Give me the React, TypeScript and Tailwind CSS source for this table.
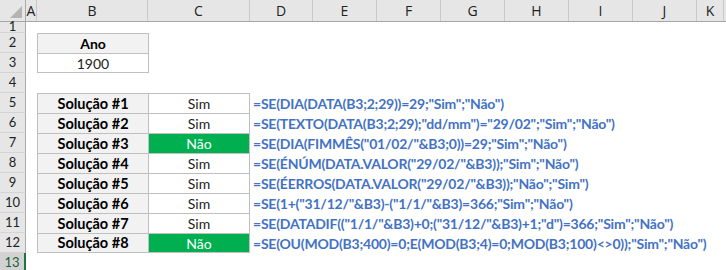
import React from "react";

const cols = [
  { key: "D", w: "w-[63px]" },
  { key: "E", w: "w-[64px]" },
  { key: "F", w: "w-[64px]" },
  { key: "G", w: "w-[64px]" },
  { key: "H", w: "w-[64px]" },
  { key: "I", w: "w-[64px]" },
  { key: "J", w: "w-[64px]" },
];

const solucoes = [
  { n: 1, res: "Sim", f: '=SE(DIA(DATA(B3;2;29))=29;"Sim";"Não")' },
  { n: 2, res: "Sim", f: '=SE(TEXTO(DATA(B3;2;29);"dd/mm")="29/02";"Sim";"Não")' },
  { n: 3, res: "Não", f: '=SE(DIA(FIMMÊS("01/02/"&B3;0))=29;"Sim";"Não")' },
  { n: 4, res: "Sim", f: '=SE(ÉNÚM(DATA.VALOR("29/02/"&B3));"Sim";"Não")' },
  { n: 5, res: "Sim", f: '=SE(ÉERROS(DATA.VALOR("29/02/"&B3));"Não";"Sim")' },
  { n: 6, res: "Sim", f: '=SE(1+("31/12/"&B3)-("1/1/"&B3)=366;"Sim";"Não")' },
  { n: 7, res: "Sim", f: '=SE(DATADIF(("1/1/"&B3)+0;("31/12/"&B3)+1;"d")=366;"Sim";"Não")' },
  { n: 8, res: "Não", f: '=SE(OU(MOD(B3;400)=0;E(MOD(B3;4)=0;MOD(B3;100)<>0));"Sim";"Não")' },
];

const cellFont = { fontFamily: "Lato, 'Open Sans', sans-serif" };

function RowHead({ label, active = false }: { label: string; active?: boolean }) {
  return (
    <div
      className={
        active
          ? "w-[26px] shrink-0 flex items-center justify-center bg-[#d2d2d2] border-r-2 border-[#217346] text-[#1e5d3a] text-[13px]"
          : "w-[26px] shrink-0 flex items-center justify-center bg-[#e6e6e6] border-r border-b border-r-[#ababab] border-b-[#d4d4d4] text-[#222] text-[13px]"
      }
    >
      {label}
    </div>
  );
}

function SheetRow({
  label,
  h,
  active,
  children,
}: {
  label: string;
  h: string;
  active?: boolean;
  children?: React.ReactNode;
}) {
  return (
    <div className={`flex ${h}`}>
      <RowHead label={label} active={active} />
      <div className="w-[11px] shrink-0" />
      {children}
    </div>
  );
}

export default function App() {
  return (
    <div
      className="w-[726px] h-[270px] overflow-hidden bg-white select-none"
      style={{ fontFamily: "'Open Sans', 'Noto Sans', sans-serif" }}
    >
      {/* column headers */}
      <div className="flex h-[22px] bg-[#e6e6e6] border-b border-[#a6a6a6] text-[14px] text-[#222]">
        <div className="w-[26px] shrink-0 border-r border-[#ababab] relative">
          <svg className="absolute inset-0" width="25" height="21" viewBox="0 0 25 21">
            <polygon points="22,6 22,18 10,18" fill="#b4b4b4" />
          </svg>
        </div>
        <div className="w-[11px] shrink-0 border-r border-[#c8c8c8] flex items-center justify-center">A</div>
        <div className="w-[111px] shrink-0 border-r border-[#c8c8c8] flex items-center justify-center">B</div>
        <div className="w-[102px] shrink-0 border-r border-[#c8c8c8] flex items-center justify-center">C</div>
        {cols.map((c) => (
          <div key={c.key} className={`${c.w} shrink-0 border-r border-[#c8c8c8] flex items-center justify-center`}>
            {c.key}
          </div>
        ))}
        <div className="w-[27px] shrink-0 border-r border-[#c8c8c8] flex items-center justify-center">K</div>
      </div>

      <div style={cellFont} className="text-[14px]">
        <SheetRow label="1" h="h-[11px]" />
        <SheetRow label="2" h="h-[20px]">
          <div className="w-[112px] shrink-0 bg-[#f2f2f2] border border-b-0 border-[#bfbfbf] flex items-center justify-center font-bold text-black">
            Ano
          </div>
        </SheetRow>
        <SheetRow label="3" h="h-[20px]">
          <div className="w-[112px] shrink-0 bg-white border border-[#bfbfbf] flex items-center justify-center text-[#222]">
            1900
          </div>
        </SheetRow>
        <SheetRow label="4" h="h-[20px]" />

        {solucoes.map((s, i) => {
          const last = i === solucoes.length - 1;
          return (
            <SheetRow key={s.n} label={String(s.n + 4)} h="h-[20px]">
              <div
                className={`w-[111px] shrink-0 bg-[#f2f2f2] border-l border-t border-[#bfbfbf] flex items-center justify-center font-bold text-black text-[14.5px] ${
                  last ? "border-b" : ""
                }`}
              >
                Solução #{s.n}
              </div>
              <div
                className={`w-[102px] shrink-0 border-l border-t border-r border-[#bfbfbf] flex items-center justify-center ${
                  s.res === "Não" ? "bg-[#00b050] text-white" : "bg-white text-[#222]"
                } ${last ? "border-b" : ""}`}
              >
                {s.res}
              </div>
              <div className="flex items-center pl-[3px] whitespace-nowrap font-bold text-[#4472c4] tracking-[-0.22px]">
                {s.f}
              </div>
            </SheetRow>
          );
        })}

        <SheetRow label="13" h="h-[20px]" active />
      </div>
    </div>
  );
}
